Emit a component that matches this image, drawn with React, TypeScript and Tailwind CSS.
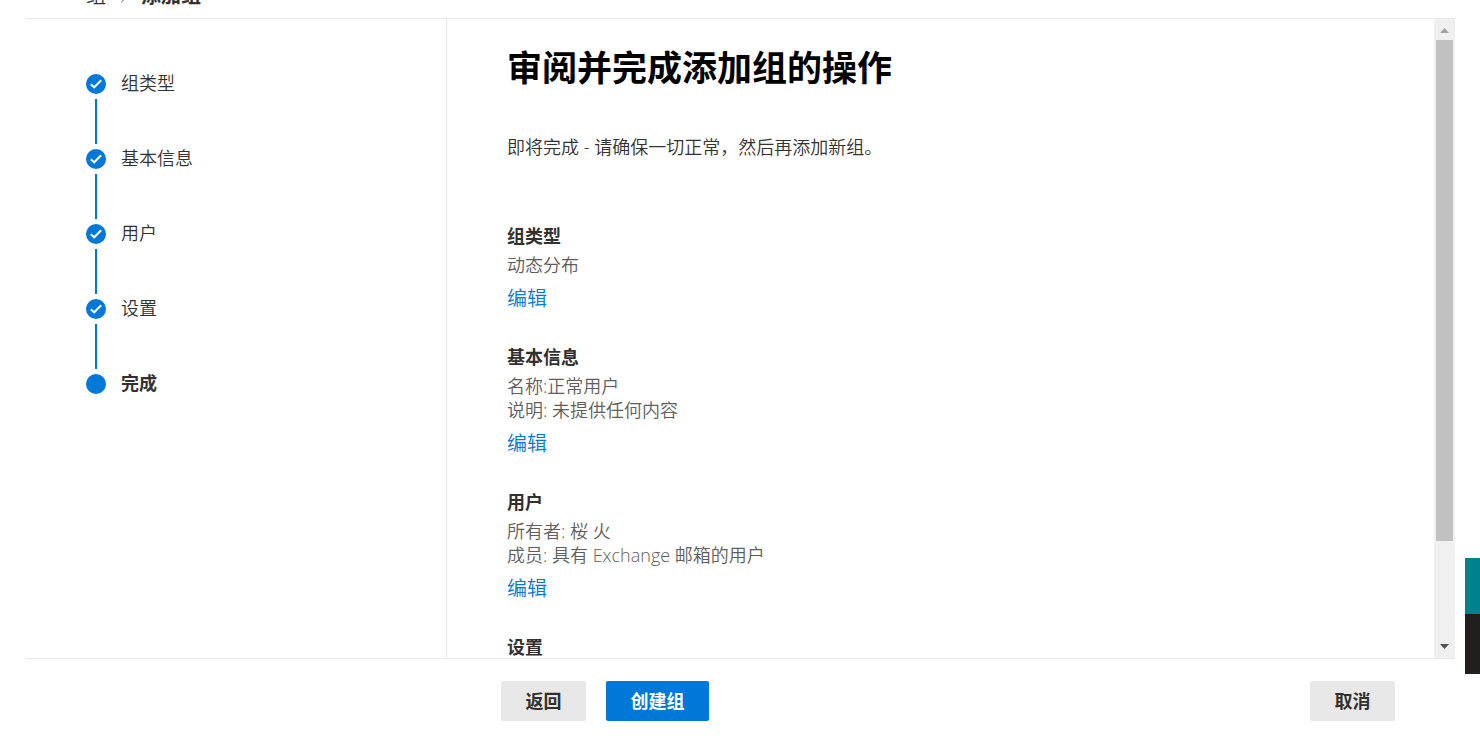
import { useState } from 'react';
import { ChevronRight } from 'lucide-react';
import clsx from 'clsx';

interface Section {
  title: string;
  lines: string[];
}

const steps = ['组类型', '基本信息', '用户', '设置', '完成'];

const sections: Section[] = [
  { title: '组类型', lines: ['动态分布'] },
  { title: '基本信息', lines: ['名称:正常用户', '说明: 未提供任何内容'] },
  { title: '用户', lines: ['所有者: 桜 火', '成员: 具有 Exchange 邮箱的用户'] },
  { title: '设置', lines: [] },
];

function StepIcon({ done }: { done: boolean }) {
  return (
    <svg viewBox="0 0 20 20" className="block h-5 w-5" aria-hidden="true">
      <circle cx="10" cy="10" r="10" fill="#0078d7" />
      {done && <path d="M4.8 10.3 8.2 13.3 15.2 6.3" fill="none" stroke="#fff" strokeWidth="2" />}
    </svg>
  );
}

function StepNav({ current }: { current: number }) {
  return (
    <nav className="w-[421px] shrink-0 border-r border-[#eaeaea] pt-[55px] pl-[60px]">
      <ol>
        {steps.map((step, i) => (
          <li key={step} className="flex gap-[15px]">
            <div className="flex flex-col items-center">
              <StepIcon done={i < current} />
              {i < steps.length - 1 && <span className="my-[5px] h-[45px] w-0.5 bg-[#0078d7]" />}
            </div>
            <span
              className={clsx('text-[18px] leading-[18px] text-[#323130]', i === current ? 'font-bold' : 'font-[350]')}
              aria-current={i === current ? 'step' : undefined}
            >
              {step}
            </span>
          </li>
        ))}
      </ol>
    </nav>
  );
}

function ReviewSection({ title, lines }: Section) {
  return (
    <section className="mb-8">
      <h2 className="text-[18px] leading-6 font-bold text-[#323130]">{title}</h2>
      {lines.length > 0 && (
        <>
          <div className="mt-[5px] text-[18px] leading-6 font-[350] text-[#605e5c]">
            {lines.map((line) => (
              <p key={line}>{line}</p>
            ))}
          </div>
          <a href="#" className="mt-2 block w-fit text-xl leading-7 font-[350] text-[#0078d7] hover:underline">
            编辑
          </a>
        </>
      )}
    </section>
  );
}

function ScrollTrack() {
  return (
    <div className="flex w-[21px] shrink-0 flex-col bg-[#f0f0f0]" aria-hidden="true">
      <div className="flex h-[21px] shrink-0 items-center justify-center pt-0.5">
        <svg width="9" height="5" viewBox="0 0 9 5">
          <path d="M4.5 0 9 5H0z" fill="#a3a3a3" />
        </svg>
      </div>
      <div className="min-h-0 flex-1 px-0.5">
        <div className="h-[84%] bg-[#c1c1c1]" />
      </div>
      <div className="flex h-[21px] shrink-0 items-center justify-center pb-0.5">
        <svg width="9" height="5" viewBox="0 0 9 5">
          <path d="M0 0h9L4.5 5z" fill="#505050" />
        </svg>
      </div>
    </div>
  );
}

export default function App() {
  const [current] = useState(4);

  return (
    <div className="relative flex h-screen flex-col overflow-hidden bg-white pr-[25px] pl-[26px] font-['Open_Sans','Noto_Sans_CJK_SC',sans-serif]">
      <header className="flex h-[18px] shrink-0 items-end pb-2 pl-[60px] text-xl leading-7 text-[#323130]">
        <span className="font-[350]">组</span>
        <ChevronRight className="mx-[9px] mb-1 h-4 w-[17px] text-[#605e5c]" strokeWidth={1.5} />
        <span className="font-bold">添加组</span>
      </header>

      <main className="flex min-h-0 flex-1 border-y border-[#eaeaea]">
        <StepNav current={current} />
        <div className="min-w-0 flex-1 overflow-y-auto pt-[27px] pl-[60px] [scrollbar-width:none]">
          <h1 className="text-[35px] leading-[44px] font-bold text-black">审阅并完成添加组的操作</h1>
          <p className="mt-[45px] mb-[65px] text-[18px] leading-6 font-[350] text-[#323130]">
            即将完成 - 请确保一切正常，然后再添加新组。
          </p>
          {sections.map((section) => (
            <ReviewSection key={section.title} {...section} />
          ))}
        </div>
        <ScrollTrack />
      </main>

      <footer className="flex shrink-0 items-start gap-5 pt-[22px] pr-[60px] pb-5 pl-[475px] text-[18px] font-bold text-[#323130]">
        <button type="button" className="h-10 w-[85px] rounded-xs bg-[#e8e8e8]">
          返回
        </button>
        <button type="button" className="h-10 w-[103px] rounded-xs bg-[#0078d7] text-white">
          创建组
        </button>
        <button type="button" className="ml-auto h-10 w-[85px] rounded-xs bg-[#e8e8e8]">
          取消
        </button>
      </footer>

      {/* Help and feedback tabs docked to the window edge */}
      <div className="absolute right-0 bottom-[67px] w-[15px]">
        <button type="button" aria-label="帮助" className="block h-14 w-full bg-[#00828c]" />
        <button type="button" aria-label="反馈" className="block h-[60px] w-full bg-[#201f1e]" />
      </div>
    </div>
  );
}
